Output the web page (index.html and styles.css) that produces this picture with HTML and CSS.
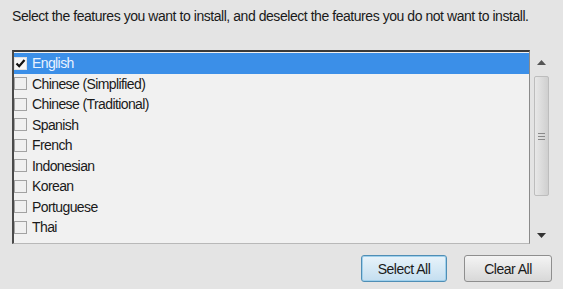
FILE: index.html
```
<!DOCTYPE html>
<html>
<head>
<meta charset="utf-8">
<link rel="stylesheet" href="styles.css">
</head>
<body>
<div class="page">
  <p class="intro">Select the features you want to install, and deselect the features you do not want to install.</p>
  <div class="listwrap">
    <ul class="list">
      <li class="item selected"><span class="box checked"><svg width="11" height="11" viewBox="0 0 11 11"><path d="M1.5 5.5 L4.2 8.2 L9.5 2" fill="none" stroke="#111" stroke-width="2.2"/></svg></span>English</li>
      <li class="item"><span class="box"></span>Chinese (Simplified)</li>
      <li class="item"><span class="box"></span>Chinese (Traditional)</li>
      <li class="item"><span class="box"></span>Spanish</li>
      <li class="item"><span class="box"></span>French</li>
      <li class="item"><span class="box"></span>Indonesian</li>
      <li class="item"><span class="box"></span>Korean</li>
      <li class="item"><span class="box"></span>Portuguese</li>
      <li class="item"><span class="box"></span>Thai</li>
    </ul>
    <div class="scroll">
      <svg class="arrow" width="9" height="5" viewBox="0 0 9 5"><path d="M0 5 L4.5 0 L9 5 Z" fill="#555"/></svg>
      <div class="thumb"><span class="grip"></span><span class="grip"></span><span class="grip"></span></div>
      <svg class="arrow" width="9" height="5" viewBox="0 0 9 5"><path d="M0 0 L9 0 L4.5 5 Z" fill="#333"/></svg>
    </div>
  </div>
  <div class="buttons">
    <button class="btn focused">Select All</button>
    <button class="btn">Clear All</button>
  </div>
</div>
</body>
</html>
```
FILE: styles.css
```
html, body {
  margin: 0;
  padding: 0;
  background: #e4e4e4;
}
.page {
  width: 563px;
  height: 289px;
  overflow: hidden;
  font-family: "Liberation Sans", Arial, sans-serif;
  color: #1a1a1a;
  box-sizing: border-box;
  padding: 8px 10px 0 12px;
}
.intro {
  margin: 0;
  font-size: 14px;
  line-height: 17px;
  letter-spacing: -0.45px;
  white-space: nowrap;
}
.listwrap {
  display: flex;
  margin-top: 25px;
  height: 194px;
}
.list {
  list-style: none;
  margin: 0;
  padding: 1px 0 0 0;
  width: 518px;
  box-sizing: border-box;
  border-top: 2px solid #3a3a3a;
  border-left: 2px solid #4a4a4a;
  border-right: 1px solid #8a8a8a;
  border-bottom: 1px solid #b8b8b8;
  background: #f1f1f1;
}
.item {
  display: flex;
  align-items: center;
  height: 20.5px;
  font-size: 14px;
  padding-left: 0;
  letter-spacing: -0.6px;
}
.item.selected {
  background: #3b8fe8;
  color: #e8f2ff;
}
.box {
  width: 11px;
  height: 11px;
  border: 1px solid #a2a2a2;
  background: #f0f0f0;
  margin-right: 5px;
  display: flex;
  align-items: center;
  justify-content: center;
}
.box.checked {
  background: #f6f6f6;
  border-color: #e0e0e0;
}
.scroll {
  width: 20px;
  margin-left: 1px;
  display: flex;
  flex-direction: column;
  align-items: center;
  justify-content: space-between;
  padding: 10px 0 6px;
  box-sizing: border-box;
}
.thumb {
  width: 15px;
  height: 120px;
  margin-top: -26px;
  box-sizing: border-box;
  border: 1px solid #bdbdbd;
  border-radius: 2px;
  background: linear-gradient(to right, #e8e8e8, #d9d9d9 60%, #cfcfcf);
  display: flex;
  flex-direction: column;
  align-items: center;
  justify-content: center;
  gap: 2px;
}
.grip {
  width: 7px;
  height: 1px;
  background: #8a8a8a;
}
.buttons {
  display: flex;
  justify-content: flex-end;
  gap: 17px;
  margin-top: 11px;
  padding-right: 1px;
}
.btn {
  font-family: "Liberation Sans", Arial, sans-serif;
  font-size: 14px;
  color: #1a1a1a;
  height: 27px;
  border: 1px solid #8e8e8e;
  border-radius: 3px;
  background: linear-gradient(to bottom, #f4f4f4, #e6e6e6 50%, #d8d8d8);
  padding: 0;
  letter-spacing: -0.5px;
}
.btn.focused {
  width: 86px;
  border-color: #4f8eb5;
  box-shadow: inset 0 0 0 1px #9fd0ec;
  background: linear-gradient(to bottom, #e8f3fa, #d6e9f5 50%, #c4def0);
}
.btn:not(.focused) {
  width: 88px;
}
```
